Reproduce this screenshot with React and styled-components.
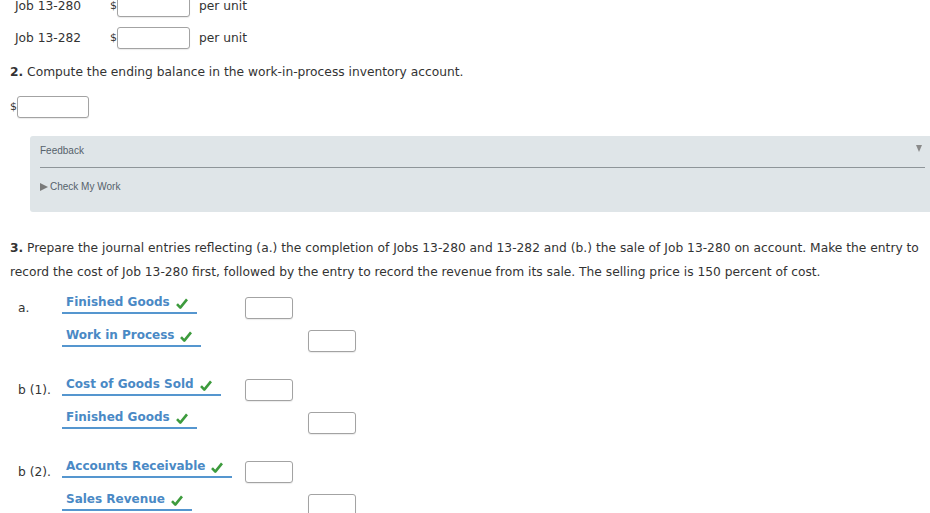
import React from 'react';
import styled, { createGlobalStyle } from 'styled-components';

const GlobalStyle = createGlobalStyle`
  html, body {
    margin: 0;
    padding: 0;
    background: #fff;
    overflow: hidden;
  }
  body {
    font-family: "DejaVu Sans", Verdana, sans-serif;
    font-size: 12.25px;
    color: #333;
  }
`

const Page = styled.div`
  width: 930px;
  height: 513px;
  overflow: hidden;
`

// the page is scrolled a little: the first row sits partly above the top edge
const Scroller = styled.div`
  margin-top: -10px;
  padding-left: 10px;
`

const JobRow = styled.div`
  display: grid;
  grid-template-columns: 95px 7px 73px auto;
  align-items: center;
  height: 32px;
  padding-left: 5px;
`

const Dollar = styled.span`
  font-size: 11px;
  line-height: 22px;
`

const TextBox = styled.input`
  box-sizing: border-box;
  width: ${p => p.$w || 48}px;
  height: 22px;
  margin: 0;
  border: 1px solid #a3a3a3;
  border-radius: 3px;
  background: #fff;
  box-shadow: 0 1px 1px rgba(0, 0, 0, 0.08);
  outline: none;
`

const PerUnit = styled.span`
  padding-left: 9px;
`

const Question = styled.p`
  margin: ${p => p.$top || 9}px 0 0;
  line-height: ${p => p.$lh || 18}px;
  padding-right: 4px;
`

const Num = styled.b`
  font-weight: bold;
`

const AmountRow = styled.div`
  display: flex;
  align-items: center;
  margin-top: 15px;
  height: 22px;
`

const Feedback = styled.section`
  margin: 18px 0 0 20px;
  height: 76px;
  box-sizing: border-box;
  background: #dfe5e8;
  border-radius: 3px 0 0 3px;
  font-family: "Liberation Sans", Arial, sans-serif;
  font-size: 10px;
  color: #56626b;
`

const FeedbackHead = styled.div`
  display: flex;
  justify-content: space-between;
  align-items: flex-start;
  margin: 0 5px 0 10px;
  padding: 9px 0 10px;
  line-height: 12px;
  border-bottom: 1px solid #8e9599;
`

const Caret = styled.span`
  width: 0;
  height: 0;
  margin: 0 3px 0 0;
  border-left: 3.5px solid transparent;
  border-right: 3.5px solid transparent;
  border-top: 7px solid #8a8a8a;
`

const FeedbackBody = styled.div`
  display: flex;
  align-items: center;
  padding: 13px 10px 0;
  line-height: 12px;
`

const PlayArrow = styled.span`
  width: 0;
  height: 0;
  margin-right: 2px;
  border-top: 4px solid transparent;
  border-bottom: 4px solid transparent;
  border-left: 8px solid #7a7a7a;
`

const Journal = styled.div`
  margin-top: 9px;
`

const Group = styled.div`
  & + & {
    margin-top: 16px;
  }
`

const EntryRow = styled.div`
  display: grid;
  grid-template-columns: 44px 183px 63px 1fr;
  height: 33px;
  align-items: start;
  padding-left: 8px;
`

const EntryLabel = styled.span`
  line-height: 22px;
  margin-top: 4px;
`

const Account = styled.span`
  justify-self: start;
  padding: 0 9px 1px 4px;
  line-height: 18px;
  font-size: 12px;
  font-weight: bold;
  color: #4a89c5;
  border-bottom: 2px solid #5596cf;
  white-space: nowrap;
`

const Check = styled.svg`
  width: 12px;
  height: 11px;
  margin-left: 6px;
  vertical-align: -3px;
`

const Cell = styled.div`
  margin-top: 4px;
  grid-column: ${p => p.$col};
`

function Tick() {
  return (
    <Check viewBox="0 0 12 11">
      <path d="M1 6.2 L4.3 9.6 L11 1.4" fill="none" stroke="#3d9b3d" strokeWidth="2.6" strokeLinejoin="round" />
    </Check>
  );
}

const entries = [
  { label: 'a.', lines: [['Finished Goods', 3], ['Work in Process', 4]] },
  { label: 'b (1).', lines: [['Cost of Goods Sold', 3], ['Finished Goods', 4]] },
  { label: 'b (2).', lines: [['Accounts Receivable', 3], ['Sales Revenue', 4]] },
];

export default function App() {
  return (
    <Page>
      <GlobalStyle />
      <Scroller>
        <JobRow>
          <span>Job 13-280</span>
          <Dollar>$</Dollar>
          <TextBox $w={73} />
          <PerUnit>per unit</PerUnit>
        </JobRow>
        <JobRow>
          <span>Job 13-282</span>
          <Dollar>$</Dollar>
          <TextBox $w={73} />
          <PerUnit>per unit</PerUnit>
        </JobRow>

        <Question>
          <Num>2.</Num> Compute the ending balance in the work-in-process inventory account.
        </Question>
        <AmountRow>
          <Dollar>$</Dollar>
          <TextBox $w={72} />
        </AmountRow>

        <Feedback>
          <FeedbackHead>
            <span>Feedback</span>
            <Caret />
          </FeedbackHead>
          <FeedbackBody>
            <PlayArrow />
            <span>Check My Work</span>
          </FeedbackBody>
        </Feedback>

        <Question $top={24} $lh={24}>
          <Num>3.</Num> Prepare the journal entries reflecting (a.) the completion of Jobs 13-280 and 13-282 and (b.) the sale of Job 13-280 on account. Make the entry to record the cost of Job 13-280 first, followed by the entry to record the revenue from its sale. The selling price is 150 percent of cost.
        </Question>

        <Journal>
          {entries.map(e => (
            <Group key={e.label}>
              {e.lines.map(([name, col], i) => (
                <EntryRow key={name + i}>
                  <EntryLabel>{i === 0 ? e.label : ''}</EntryLabel>
                  <Account>{name}<Tick /></Account>
                  <Cell $col={col}><TextBox $w={48} /></Cell>
                </EntryRow>
              ))}
            </Group>
          ))}
        </Journal>
      </Scroller>
    </Page>
  );
}
